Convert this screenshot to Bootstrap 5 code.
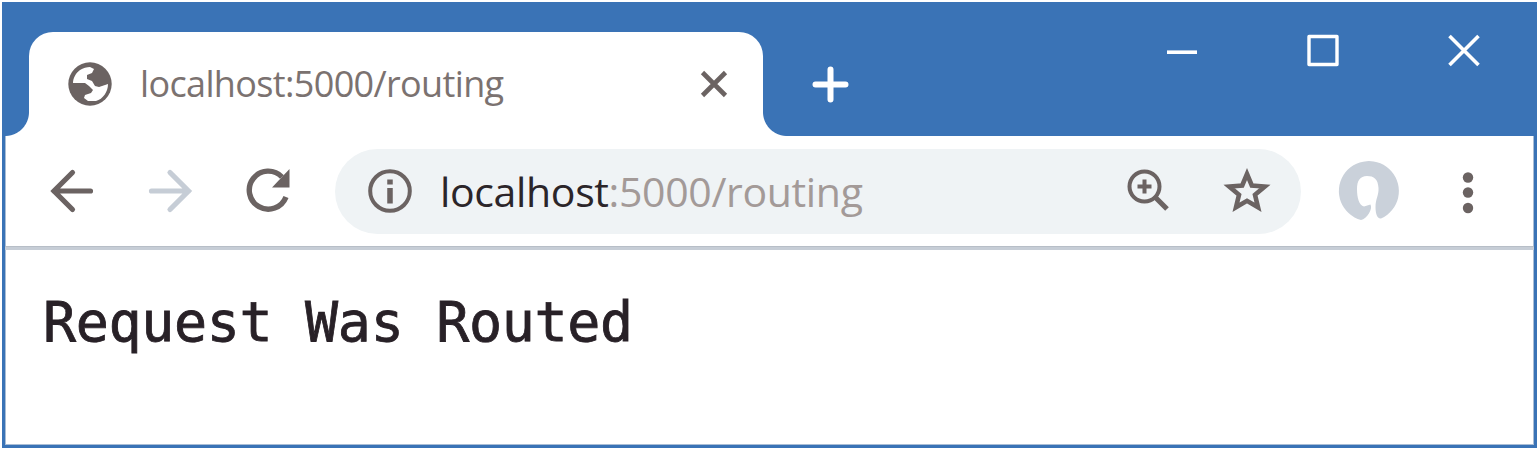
<!DOCTYPE html>
<html lang="en">
<head>
<meta charset="utf-8">
<title>localhost:5000/routing</title>
<link href="https://cdn.jsdelivr.net/npm/bootstrap@5.3.0/dist/css/bootstrap.min.css" rel="stylesheet">
<style>
:root { --frame: #3a73b6; --ink: #6b6362; --pale: #c6cdd6; }
body { background: #fff; }
svg { display: block; flex: none; overflow: visible; }
.window { width: 1535px; height: 446px; margin: 2px; border: solid var(--frame); border-width: 0 3px 3px; box-shadow: inset 1px -1px 0 #a9bdd5, inset -1px 0 0 #a9bdd5; }
.titlebar { height: 134px; background: var(--frame); color: #fff; }
.tab-page { position: relative; width: 734px; height: 104px; margin-left: 24px; padding-left: 39px; background: #fff; border-radius: 24px 24px 0 0; color: var(--ink); }
.tab-page::before, .tab-page::after { content: ""; position: absolute; bottom: 0; width: 24px; height: 24px; }
.tab-page::before { right: 100%; background: radial-gradient(circle at 0 0, transparent 23.5px, #fff 24.5px); }
.tab-page::after { left: 100%; background: radial-gradient(circle at 100% 0, transparent 23.5px, #fff 24.5px); }
.ui-text { font-family: "Open Sans", "Noto Sans", sans-serif; line-height: 1; white-space: nowrap; }
.tab-title { font-size: 36px; margin-left: 28px; width: 561px; letter-spacing: -.65px; color: #7b7270; }
.new-tab { margin-left: 49px; }
.controls { margin-left: auto; gap: 109px; padding: 31px 54px 0 0; }
.toolbar { height: 110px; padding: 0 60px 0 45px; color: var(--ink); }
.forward { margin-left: 55px; color: var(--pale); }
.reload { margin-left: 53px; }
.address { width: 966px; height: 85px; margin-left: 45px; padding: 0 32px 0 33px; background: #eff3f5; }
.url { font-size: 41px; margin-left: 28px; letter-spacing: -.35px; color: #a39a98; }
.url-host { color: #2b2529; }
.bookmark { margin-left: 54px; }
.avatar { margin-left: 37px; color: #cad1da; }
.divider { height: 4px; background: var(--pale); border-top: 1px solid #b7bec7; }
.response { font: 55px/64px "DejaVu Sans Mono", monospace; letter-spacing: -.35px; -webkit-text-stroke: .8px; color: #282127; margin: 0; padding: 40px 0 0 38px; overflow: hidden; }
</style>
</head>
<body>
<div class="window">
  <header class="titlebar d-flex">
    <div class="tab-page d-flex align-items-center align-self-end">
      <svg width="44" height="44" viewBox="0 0 44 44"><circle cx="22" cy="22" r="21.7" fill="currentColor"/><path fill="#fff" d="M12 8C15 6 19 5 22 5L26 7L24 11L19 13L19 17L24 19L27 24L31 25L40 22C40 30 35 37 28 39L20 39L16 36L17 33L23 31L25 28L21 24L17 21L5 21C5 16 8 11 12 8z"/></svg>
      <div class="tab-title ui-text">localhost:5000/routing</div>
      <svg width="26" height="26" viewBox="0 0 26 26" stroke="currentColor" stroke-width="4.6"><path d="M1.500 1.500l23 23m0-23l-23 23"/></svg>
    </div>
    <svg class="new-tab align-self-end mb-4" width="38" height="56" viewBox="0 0 38 56" stroke="#fff" stroke-width="6" stroke-linecap="round"><path d="M3.500 28.500h30M18.500 13.500v30"/></svg>
    <div class="controls d-flex">
      <svg width="32" height="34" viewBox="0 0 32 34" stroke="#fff" stroke-width="3.600"><path d="M1 19.200h30"/></svg>
      <svg width="32" height="34" viewBox="0 0 32 34" fill="none" stroke="#fff" stroke-width="3.400"><path stroke-linejoin="round" d="M2 3.500h28v28H2z"/></svg>
      <svg width="32" height="34" viewBox="0 0 32 34" stroke="#fff" stroke-width="3.600"><path d="M1.500 3l29 29m0-29l-29 29"/></svg>
    </div>
  </header>
  <nav class="toolbar d-flex align-items-center">
    <svg width="44" height="44" viewBox="0 0 44 44" fill="none" stroke="currentColor" stroke-width="5.200" stroke-linecap="round"><path d="M40.500 22H4M22.500 3.500L4 22l18.500 18.500"/></svg>
    <svg class="forward" width="44" height="44" viewBox="0 0 44 44" fill="none" stroke="currentColor" stroke-width="5.200" stroke-linecap="round"><path d="M2.500 22h37M21 3.500l18.500 18.500L21 40.500"/></svg>
    <svg class="reload" width="44" height="44" viewBox="0 0 44 44" fill="none" stroke="currentColor" stroke-width="5.400"><path d="M40 28a19 19 0 1 1-4-20"/><path fill="currentColor" stroke="none" d="M43.500 0v18.500H26z"/></svg>
    <div class="address rounded-pill d-flex align-items-center">
      <svg width="44" height="44" viewBox="0 0 44 44" fill="none" stroke="currentColor"><circle cx="22" cy="22" r="19.800" stroke-width="4"/><path stroke-width="5.500" d="M22 19v15.500M22 10.500v5"/></svg>
      <div class="url ui-text"><span class="url-host">localhost</span>:5000/routing</div>
      <svg class="ms-auto" width="44" height="44" viewBox="0 0 44 44" fill="none" stroke="currentColor"><circle cx="17.500" cy="17.500" r="15" stroke-width="4"/><path stroke-width="5.200" d="M28 28l12 12"/><path stroke-width="4" d="M10.500 17.500h14M17.500 10.500v14"/></svg>
      <svg class="bookmark" width="44" height="44" viewBox="0 0 44 44" fill="none" stroke="currentColor" stroke-width="4.600"><path d="M22 5l4.800 11.500 13 1-9.800 8.300 3 12.500L22 31.800l-11 6.500 3-12.500-9.800-8.300 13-1z"/></svg>
    </div>
    <svg class="avatar" width="60" height="60" viewBox="0 0 60 60"><path fill="currentColor" d="M23 59A30 30 0 1 1 43 57.500C39 58 37.500 52 37.500 46C37.500 38 41 34 40.500 27C40 18 36 15 29 15C22 15 19 20 19 28C19 37 21 44 26 45.500L32.500 43.500C35 48 29 58 23 59z"/></svg>
    <svg class="ms-auto" width="12" height="44" viewBox="0 0 12 44" fill="currentColor"><circle cx="6" cy="8.500" r="5.200"/><circle cx="6" cy="23.500" r="5.200"/><circle cx="6" cy="39" r="5.200"/></svg>
  </nav>
  <div class="divider"></div>
  <main><pre class="response">Request Was Routed</pre></main>
</div>
</body>
</html>
